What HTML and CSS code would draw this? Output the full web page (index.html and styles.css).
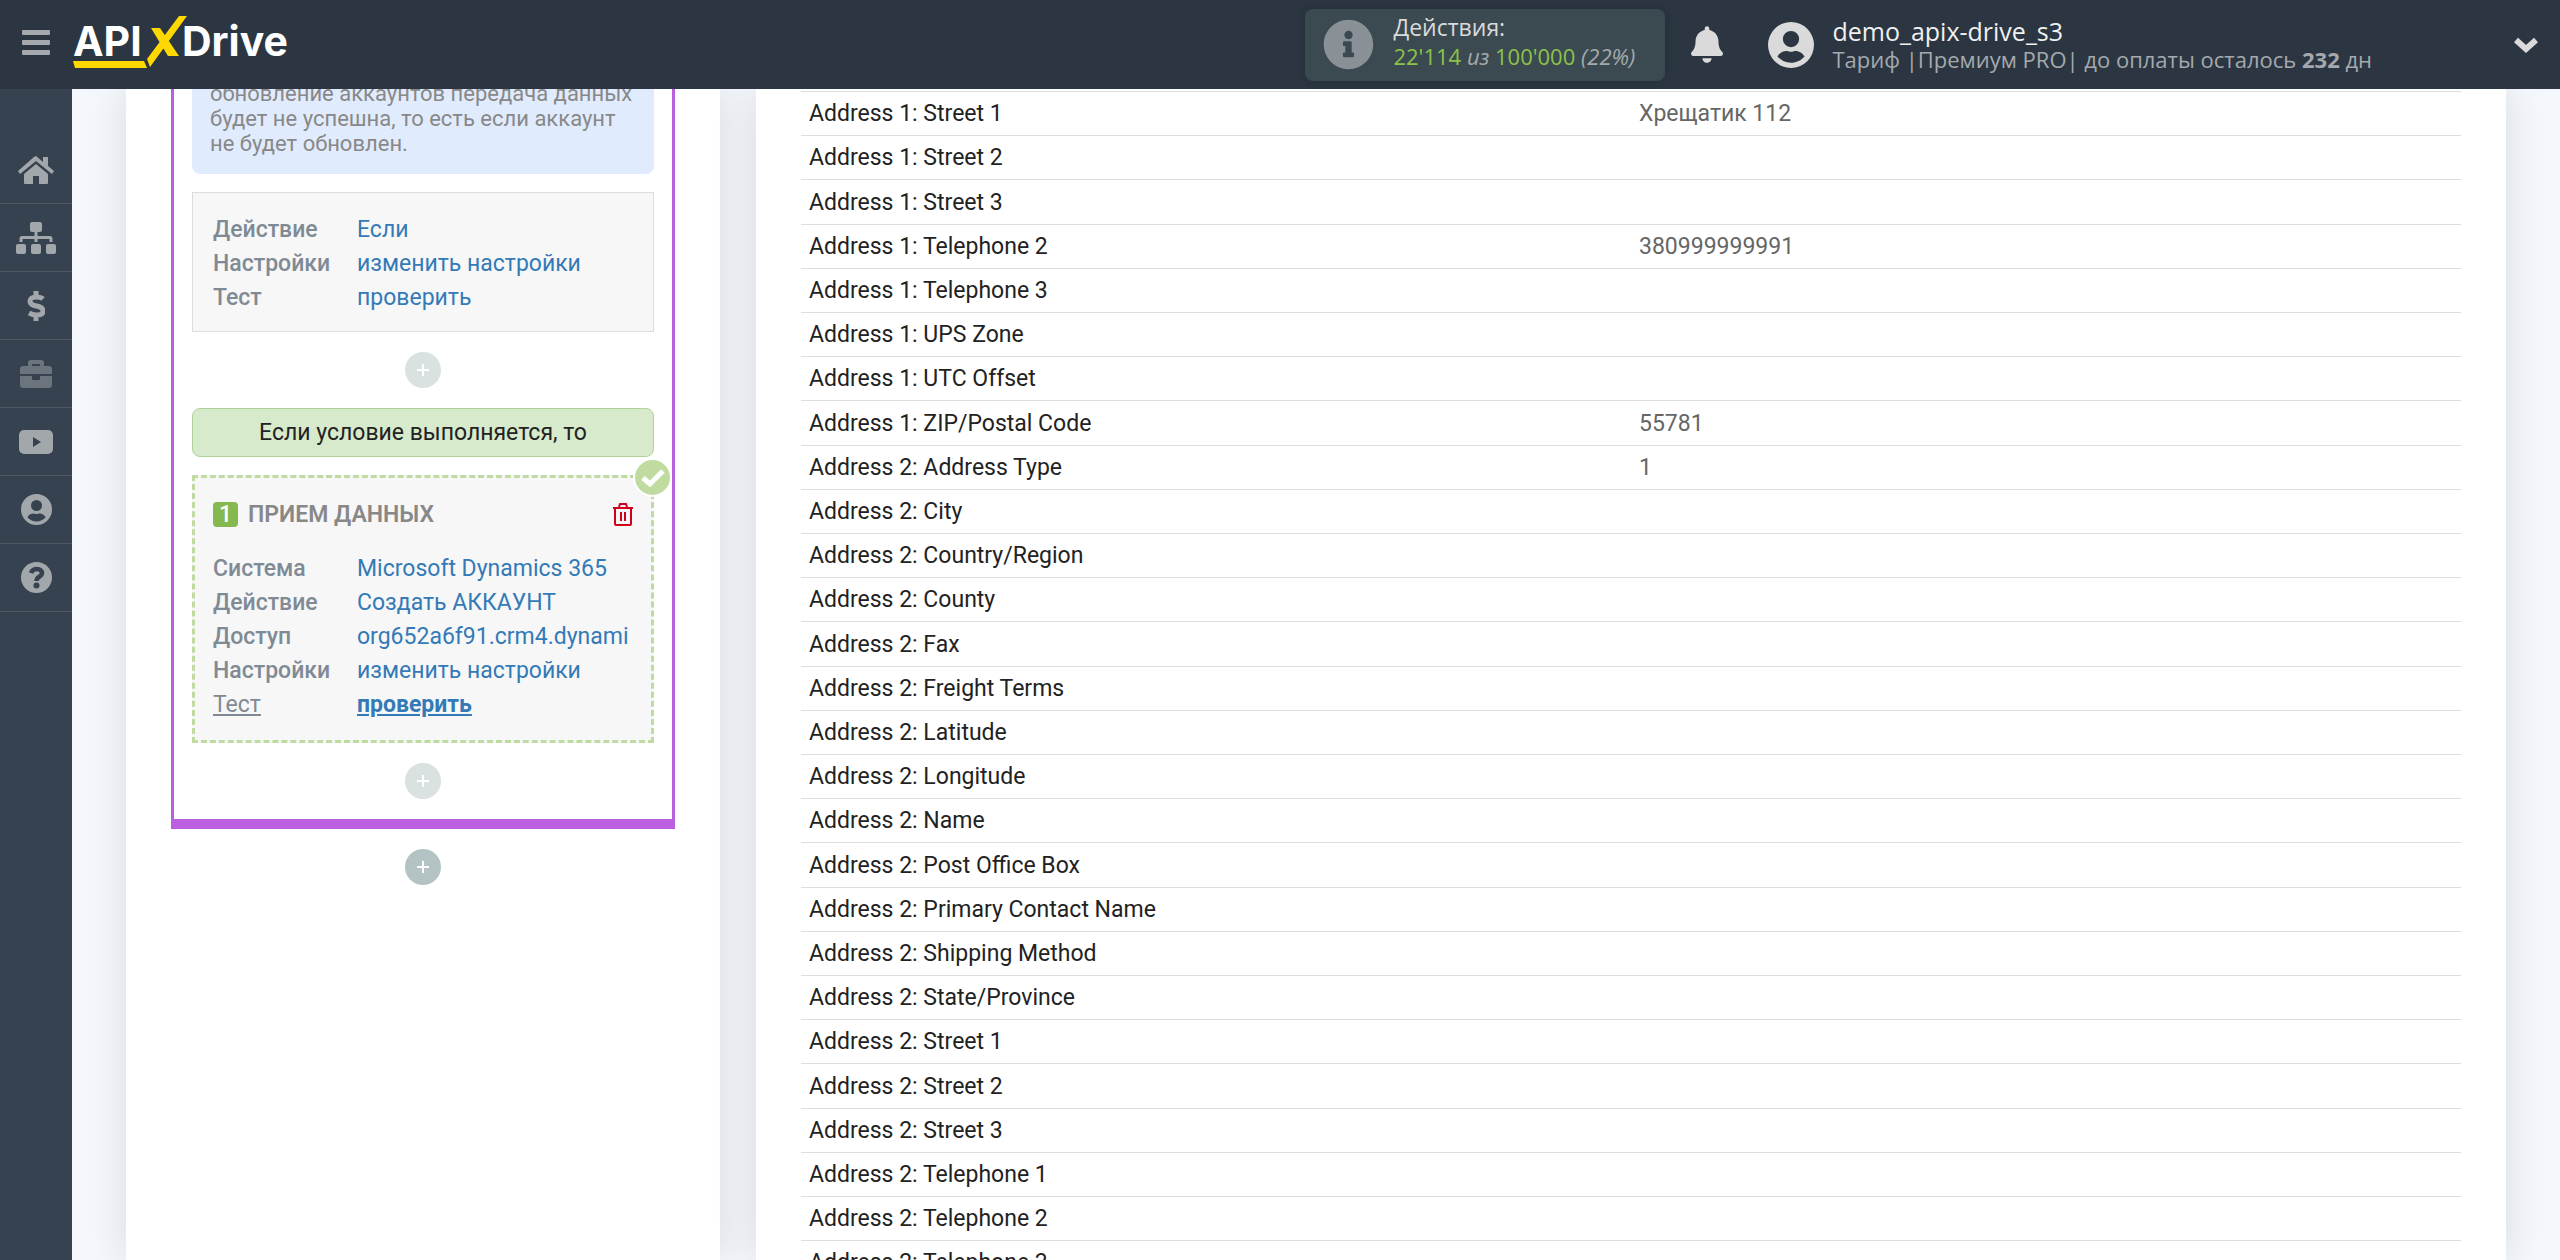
FILE: index.html
```html
<!DOCTYPE html>
<html lang="ru">
<head>
<meta charset="utf-8">
<title>ApiX-Drive</title>
<link rel="stylesheet" href="styles.css">
</head>
<body>
<header class="topbar">
  <button class="icon-button menu-button" type="button" aria-label="Меню">
    <svg width="28" height="25" viewBox="0 0 28 25"><path fill="#a5a9ad" d="M1 0h26a1 1 0 0 1 1 1v3a1 1 0 0 1-1 1H1a1 1 0 0 1-1-1V1a1 1 0 0 1 1-1zM1 10h26a1 1 0 0 1 1 1v3a1 1 0 0 1-1 1H1a1 1 0 0 1-1-1v-3a1 1 0 0 1 1-1zM1 20h26a1 1 0 0 1 1 1v3a1 1 0 0 1-1 1H1a1 1 0 0 1-1-1v-3a1 1 0 0 1 1-1z"/></svg>
  </button>
  <a class="logo" href="#" aria-label="ApiX-Drive">
    <svg width="222" height="56" viewBox="0 0 222 56">
      <g fill="#ffd800"><path d="M0 46h71l3 7H2zM77 52l-3-8L106 1h8zM78 13h9l19 28H95z"/></g>
      <g class="logo-text"><text x="0" y="41">API</text><text x="109" y="41">Drive</text></g>
    </svg>
  </a>
  <div class="usage">
    <svg width="51" height="51" viewBox="0 0 512 512"><path fill="#899197" d="M256 8C119 8 8 119 8 256s111 248 248 248 248-111 248-248S393 8 256 8zm0 110a42 42 0 1 1 0 84 42 42 0 0 1 0-84zm56 254c0 7-5 12-12 12h-88c-7 0-12-5-12-12v-24c0-7 5-12 12-12h12v-64h-12c-7 0-12-5-12-12v-24c0-7 5-12 12-12h64c7 0 12 5 12 12v100h12c7 0 12 5 12 12z"/></svg>
    <div class="usage-text">
      <div class="usage-title">Действия:</div>
      <div class="usage-value"><b>22'114</b> <i>из</i> <b>100'000</b> <i>(22%)</i></div>
    </div>
  </div>
  <button class="icon-button bell" type="button" aria-label="Уведомления">
    <svg width="32" height="37" viewBox="0 0 448 512"><path fill="#dadada" d="M224 512c35 0 64-29 64-64H160c0 35 29 64 64 64zm215-150c-19-21-55-52-55-154 0-78-55-140-128-155V32a32 32 0 1 0-64 0v21C119 68 64 130 64 208c0 102-36 133-55 154-6 6-9 14-9 22 0 16 13 32 32 32h384c19 0 32-16 32-32 0-8-3-16-9-22z"/></svg>
  </button>
  <div class="account">
    <svg width="46" height="46" viewBox="0 0 496 496"><path fill="#dadada" d="M248 0a248 248 0 1 0 0 496 248 248 0 0 0 0-496zm0 96a88 88 0 1 1 0 176 88 88 0 0 1 0-176zm0 344c-59 0-111-27-146-68 19-35 55-60 98-60 11 0 24 8 48 8s37-8 48-8c43 0 79 25 98 60-35 41-87 68-146 68z"/></svg>
    <div>
      <div class="account-name">demo_apix-drive_s3</div>
      <div class="account-plan">Тариф |Премиум PRO| до оплаты осталось <b>232</b> дн</div>
    </div>
  </div>
  <button class="icon-button" type="button" aria-label="Развернуть">
    <svg width="24" height="16" viewBox="0 0 24 16"><path fill="none" stroke="#dadada" stroke-width="6" d="M2 3l10 9L22 3"/></svg>
  </button>
</header>

<div class="layout">
  <nav class="sidebar" aria-label="Основное меню">
    <a href="#" aria-label="Главная"><svg width="36" height="28" viewBox="0 0 36 28"><g fill="#a2a7ab"><path d="M18 8L30 18v9a1 1 0 0 1-1 1h-8v-8h-6v8H7a1 1 0 0 1-1-1v-9z"/><path d="M18 0l7 6V1h5v9l6 5-2 3L18 5 2 18l-2-3L16 1z"/></g></svg></a>
    <a href="#" aria-label="Связи"><svg width="40" height="32" viewBox="0 0 640 512"><path fill="#a2a7ab" d="M128 352H32c-18 0-32 14-32 32v96c0 18 14 32 32 32h96c18 0 32-14 32-32v-96c0-18-14-32-32-32zm-24-80h192v48h48v-48h192v48h48v-57c0-22-18-39-39-39H344v-64h40c18 0 32-14 32-32V32c0-18-14-32-32-32H256c-18 0-32 14-32 32v96c0 18 14 32 32 32h40v64H95c-21 0-39 17-39 39v57h48zm264 80h-96c-18 0-32 14-32 32v96c0 18 14 32 32 32h96c18 0 32-14 32-32v-96c0-18-14-32-32-32zm240 0h-96c-18 0-32 14-32 32v96c0 18 14 32 32 32h96c18 0 32-14 32-32v-96c0-18-14-32-32-32z"/></svg></a>
    <a href="#" aria-label="Оплата"><svg width="18" height="30" viewBox="0 0 18 30"><path fill="none" stroke="#a2a7ab" stroke-width="5" d="M9 0v5M9 25v5M16 8c-2-2-5-2-7-2-4 0-6 2-6 4 0 7 13 3 13 10 0 3-3 4-7 4-3 0-5-1-7-2"/></svg></a>
    <a href="#" class="dim" aria-label="Портфель"><svg width="32" height="28" viewBox="0 0 32 28"><path fill="#a2a7ab" fill-rule="evenodd" d="M3 6h5V3a3 3 0 0 1 3-3h10a3 3 0 0 1 3 3v3h5a3 3 0 0 1 3 3v5H0V9a3 3 0 0 1 3-3zm9-2v2h8V4zM0 16h12v3a1 1 0 0 0 1 1h6a1 1 0 0 0 1-1v-3h12v9a3 3 0 0 1-3 3H3a3 3 0 0 1-3-3z"/></svg></a>
    <a href="#" aria-label="Видео"><svg width="34" height="24" viewBox="0 0 34 24"><path fill="#a2a7ab" fill-rule="evenodd" d="M5 0h24a5 5 0 0 1 5 5v14a5 5 0 0 1-5 5H5a5 5 0 0 1-5-5V5a5 5 0 0 1 5-5zm9 7v10l8-5z"/></svg></a>
    <a href="#" aria-label="Профиль"><svg width="31" height="31" viewBox="0 0 496 496"><path fill="#a2a7ab" d="M248 0a248 248 0 1 0 0 496 248 248 0 0 0 0-496zm0 96a88 88 0 1 1 0 176 88 88 0 0 1 0-176zm0 344c-59 0-111-27-146-68 19-35 55-60 98-60 11 0 24 8 48 8s37-8 48-8c43 0 79 25 98 60-35 41-87 68-146 68z"/></svg></a>
    <a href="#" aria-label="Помощь"><svg width="31" height="31" viewBox="0 0 62 62"><circle cx="31" cy="31" r="31" fill="#a2a7ab"/><path fill="none" stroke="#36424f" stroke-width="9" d="M20 22c2-6 6-8 12-8s10 4 10 8c0 8-11 7-11 16"/><circle cx="31" cy="47" r="6" fill="#36424f"/></svg></a>
  </nav>

  <main class="content">
    <section class="panel steps">
      <div class="branch">
        <p class="note">обновление аккаунтов передача данных будет не успешна, то есть если аккаунт не будет обновлен.</p>
        <div class="step">
          <dl class="fields">
            <dt>Действие</dt><dd><a href="#">Если</a></dd>
            <dt>Настройки</dt><dd><a href="#">изменить настройки</a></dd>
            <dt>Тест</dt><dd><a href="#">проверить</a></dd>
          </dl>
        </div>
        <button class="add faded" type="button" aria-label="Добавить"><svg width="14" height="14" viewBox="0 0 14 14"><path stroke="#fff" stroke-width="2" d="M7 1v12M1 7h12"/></svg></button>
        <div class="condition">Если условие выполняется, то</div>
        <div class="step active">
          <span class="done"><svg width="24" height="18" viewBox="0 0 24 18"><path fill="none" stroke="#fff" stroke-width="5" d="M2 9l7 6L22 2"/></svg></span>
          <div class="step-head">
            <span class="number">1</span>
            <h2>ПРИЕМ ДАННЫХ</h2>
            <button class="icon-button" type="button" aria-label="Удалить"><svg width="20" height="23" viewBox="0 0 20 23"><path fill="none" stroke="#d0021b" stroke-width="2" d="M0 5h20M6 4l1-3h6l1 3M2 5v16a1 1 0 0 0 1 1h14a1 1 0 0 0 1-1V5M8 9v9M12 9v9"/></svg></button>
          </div>
          <dl class="fields">
            <dt>Система</dt><dd><a href="#">Microsoft Dynamics 365</a></dd>
            <dt>Действие</dt><dd><a href="#">Создать АККАУНТ</a></dd>
            <dt>Доступ</dt><dd><a href="#">org652a6f91.crm4.dynami</a></dd>
            <dt>Настройки</dt><dd><a href="#">изменить настройки</a></dd>
            <dt class="current">Тест</dt><dd><a class="current" href="#">проверить</a></dd>
          </dl>
        </div>
        <button class="add faded" type="button" aria-label="Добавить"><svg width="14" height="14" viewBox="0 0 14 14"><path stroke="#fff" stroke-width="2" d="M7 1v12M1 7h12"/></svg></button>
      </div>
      <button class="add" type="button" aria-label="Добавить"><svg width="14" height="14" viewBox="0 0 14 14"><path stroke="#fff" stroke-width="2" d="M7 1v12M1 7h12"/></svg></button>
    </section>

    <section class="panel data">
      <table>
        <tbody>
          <tr><th scope="row">Address 1: Street 1</th><td>Хрещатик 112</td></tr>
          <tr><th scope="row">Address 1: Street 2</th><td></td></tr>
          <tr><th scope="row">Address 1: Street 3</th><td></td></tr>
          <tr><th scope="row">Address 1: Telephone 2</th><td>380999999991</td></tr>
          <tr><th scope="row">Address 1: Telephone 3</th><td></td></tr>
          <tr><th scope="row">Address 1: UPS Zone</th><td></td></tr>
          <tr><th scope="row">Address 1: UTC Offset</th><td></td></tr>
          <tr><th scope="row">Address 1: ZIP/Postal Code</th><td>55781</td></tr>
          <tr><th scope="row">Address 2: Address Type</th><td>1</td></tr>
          <tr><th scope="row">Address 2: City</th><td></td></tr>
          <tr><th scope="row">Address 2: Country/Region</th><td></td></tr>
          <tr><th scope="row">Address 2: County</th><td></td></tr>
          <tr><th scope="row">Address 2: Fax</th><td></td></tr>
          <tr><th scope="row">Address 2: Freight Terms</th><td></td></tr>
          <tr><th scope="row">Address 2: Latitude</th><td></td></tr>
          <tr><th scope="row">Address 2: Longitude</th><td></td></tr>
          <tr><th scope="row">Address 2: Name</th><td></td></tr>
          <tr><th scope="row">Address 2: Post Office Box</th><td></td></tr>
          <tr><th scope="row">Address 2: Primary Contact Name</th><td></td></tr>
          <tr><th scope="row">Address 2: Shipping Method</th><td></td></tr>
          <tr><th scope="row">Address 2: State/Province</th><td></td></tr>
          <tr><th scope="row">Address 2: Street 1</th><td></td></tr>
          <tr><th scope="row">Address 2: Street 2</th><td></td></tr>
          <tr><th scope="row">Address 2: Street 3</th><td></td></tr>
          <tr><th scope="row">Address 2: Telephone 1</th><td></td></tr>
          <tr><th scope="row">Address 2: Telephone 2</th><td></td></tr>
          <tr><th scope="row">Address 2: Telephone 3</th><td></td></tr>
        </tbody>
      </table>
    </section>
  </main>
</div>
</body>
</html>
```
FILE: styles.css
```css
* { box-sizing: border-box; }

body {
  margin: 0;
  height: 100vh;
  display: flex;
  flex-direction: column;
  overflow: hidden;
  background: #f4f7fc;
  color: #222;
  font: 23px/25px Roboto, "Noto Sans", sans-serif;
}

svg { display: block; flex: none; }

a { color: #337ab7; text-decoration: none; }

.icon-button {
  padding: 0;
  border: 0;
  background: none;
  cursor: pointer;
}

/* Top bar */
.topbar {
  flex: none;
  height: 89px;
  display: flex;
  align-items: center;
  padding: 0 22px;
  background: #2b3642;
  font-family: "Open Sans", "Noto Sans", sans-serif;
}

.menu-button { margin-bottom: 5px; }

.logo { margin: 0 auto 3px 23px; }

.logo-text {
  fill: #fff;
  font: 700 41px Inter, sans-serif;
}

.usage {
  width: 360px;
  height: 72px;
  display: flex;
  align-items: center;
  gap: 19px;
  padding: 0 18px;
  border-radius: 8px;
  background: #3b4951;
  box-shadow: 0 0 8px rgba(0, 0, 0, .15);
  line-height: 29px;
}

.usage-text { padding-bottom: 6px; }
.usage-title { color: #dadada; }
.usage-value { color: #a5a9ad; font-size: 22px; }
.usage-value b { color: #8bc34a; font-weight: 400; }

.bell { margin-left: 26px; }

.account {
  display: flex;
  align-items: center;
  gap: 18px;
  margin: 0 142px 0 45px;
  line-height: 28px;
}

.account-name { color: #f0f0f0; font-size: 25px; }
.account-plan { color: #a5a9ad; font-size: 22px; }

/* Side menu */
.layout { flex: 1; min-height: 0; display: flex; }

.sidebar {
  flex: none;
  width: 72px;
  padding-top: 47px;
  background: #36424f;
}

.sidebar a {
  height: 68px;
  display: flex;
  align-items: center;
  justify-content: center;
  border-bottom: 1px solid #4c5763;
}

.sidebar .dim svg { opacity: .5; }

/* Panels */
.content {
  flex: 1;
  display: flex;
  gap: 36px;
  padding: 0 54px;
  overflow: hidden;
}

.panel {
  background: #fff;
  box-shadow: 0 0 40px rgba(0, 0, 0, .12);
}

.steps { flex: none; width: 594px; padding: 0 45px; }

.branch {
  margin-top: -8px;
  padding: 0 18px;
  border: 3px solid #b95fe0;
  border-width: 0 3px 10px;
}

.note {
  margin: 0 0 18px;
  padding: 0 18px 18px;
  border-radius: 0 0 8px 8px;
  background: #e0ecfe;
  color: #888;
  font-size: 22px;
}

.step {
  padding: 20px 20px 16px;
  border: 1px solid #ddd;
  background: #f7f7f7;
}

.fields {
  display: grid;
  grid-template-columns: 144px 1fr;
  grid-auto-rows: 34px;
  margin: 0;
  line-height: 34px;
}

.fields dt { color: #808a95; font-weight: 500; }
.fields dd { margin: 0; white-space: nowrap; }
.fields .current { text-decoration: underline; }
.fields dt.current { font-weight: 400; }
.fields a.current { font-weight: 700; }

.add {
  display: flex;
  align-items: center;
  justify-content: center;
  width: 36px;
  height: 36px;
  margin: 20px auto;
  padding: 0;
  border: 0;
  border-radius: 50%;
  background: #b3c3c3;
}

.add.faded { background: #d9e1e1; }

.condition {
  margin-bottom: 18px;
  padding: 11px;
  border: 1px solid #b0d19a;
  border-radius: 8px;
  background: #d7eacc;
  text-align: center;
}

.step.active {
  position: relative;
  padding: 18px;
  border: 3px dashed #bfdba0;
}

.done {
  position: absolute;
  top: -20px;
  right: -21px;
  width: 39px;
  height: 39px;
  display: flex;
  align-items: center;
  justify-content: center;
  border: 2px solid #fff;
  border-radius: 50%;
  background: #bfdba0;
}

.step-head {
  display: flex;
  align-items: center;
  gap: 10px;
  height: 36px;
  margin-bottom: 20px;
}

.step-head h2 {
  flex: 1;
  margin: 0;
  color: #888;
  font-size: 23px;
  font-weight: 600;
}

.number {
  width: 25px;
  border-radius: 4px;
  background: #85b94f;
  color: #fff;
  font-weight: 500;
  text-align: center;
}

/* Field values */
.data {
  flex: 1;
  padding: 2px 45px 0;
}

table {
  width: 100%;
  table-layout: fixed;
  border-collapse: collapse;
}

tr { border-top: 1px solid #ddd; }

th, td {
  height: 44px;
  padding: 0 8px;
  font-weight: 400;
  text-align: left;
}

tr:nth-child(5n + 3) > * { height: 45px; }

td { color: #666; }
```
